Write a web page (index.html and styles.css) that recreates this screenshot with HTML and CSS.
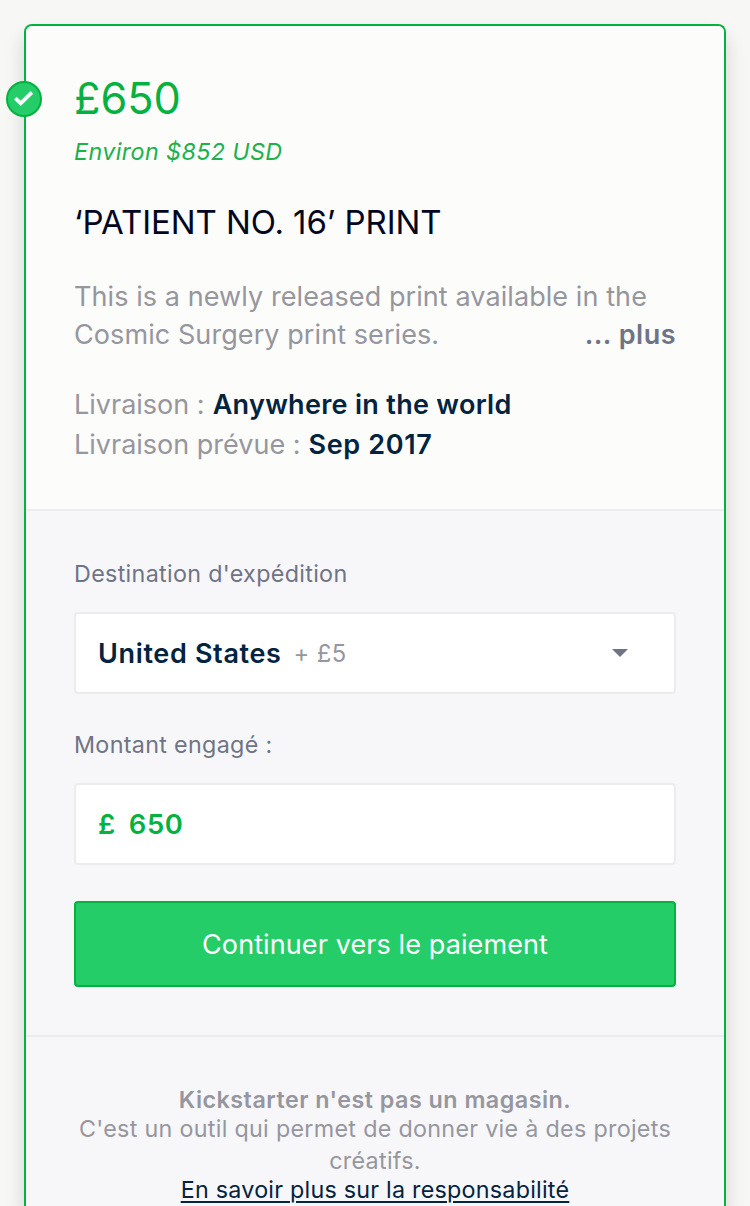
FILE: index.html
```html
<!DOCTYPE html>
<html lang="fr">
<head>
<meta charset="utf-8">
<title>£650</title>
<link rel="stylesheet" href="styles.css">
</head>
<body>
<main class="card">
  <span class="badge">
    <svg width="20" height="16" viewBox="0 0 20 16"><path d="M1.3 7.2L6.7 12.4L17.9 1.4" fill="none" stroke="#fff" stroke-width="3.8"/></svg>
  </span>
  <section class="reward">
    <h2 class="price">£650</h2>
    <p class="approx">Environ $852 USD</p>
    <h3 class="title">‘PATIENT NO. 16’ PRINT</h3>
    <div class="desc">
      <p class="desc-line"><span>This is a newly released print available in the</span></p>
      <p class="desc-line"><span>Cosmic Surgery print series.</span><b class="more">... plus</b></p>
    </div>
    <p class="detail"><span class="detail-label">Livraison :</span><b class="where">Anywhere in the world</b></p>
    <p class="detail"><span class="detail-label">Livraison prévue :</span><b class="when">Sep 2017</b></p>
  </section>
  <section class="pledge">
    <p class="label">Destination d'expédition</p>
    <div class="field">
      <b class="country">United States</b><span class="fee">+ £5</span>
      <svg class="caret" width="16" height="8" viewBox="0 0 16 8"><path d="M0 0H16L8 8Z" fill="#6f7485"/></svg>
    </div>
    <p class="label label-amount">Montant engagé :</p>
    <div class="field amount"><span class="currency">£</span><span>650</span></div>
    <button class="submit">Continuer vers le paiement</button>
  </section>
  <footer class="note">
    <b class="note-title">Kickstarter n'est pas un magasin.</b>
    <p class="note-text">C'est un outil qui permet de donner vie à des projets créatifs.</p>
    <a class="note-link">En savoir plus sur la responsabilité</a>
  </footer>
</main>
</body>
</html>
```
FILE: styles.css
```css
* { box-sizing: border-box; margin: 0; padding: 0; }
body {
  height: 1206px;
  padding: 24px 24px 0;
  background: #f7f7f5;
  font-family: Inter, "Liberation Sans", sans-serif;
  font-size: 27px;
  color: #96969e;
}
b { font-weight: 600; }
.card {
  position: relative;
  height: 1182px;
  border: 2px solid #05b141;
  border-bottom: 0;
  border-radius: 8px 8px 0 0;
  background: #f7f7fa;
  box-shadow: 0 12px 20px rgba(0, 0, 0, 0.15);
}
.badge {
  position: absolute;
  left: -20px;
  top: 55px;
  width: 36px;
  height: 36px;
  display: flex;
  align-items: center;
  justify-content: center;
  border: 2px solid #05b141;
  border-radius: 50%;
  background: #25cd69;
}
.badge svg { overflow: visible; }
.reward {
  height: 485px;
  padding: 42px 48px 0;
  background: #fcfcfa;
  border-bottom: 2px solid #ececec;
  border-radius: 6px 6px 0 0;
}
.price { font-size: 43.3px; font-weight: 400; line-height: 60px; color: #05b141; }
.approx { margin-top: 8px; font-size: 23.3px; font-style: italic; line-height: 32px; letter-spacing: 0.4px; color: #1bb14d; }
.title { margin-top: 32px; font-size: 33px; font-weight: 400; line-height: 44px; letter-spacing: -0.08px; color: #020621; white-space: nowrap; }
.desc { margin: 34px 0 31px; line-height: 38px; letter-spacing: 0.08px; }
.desc-line { display: flex; justify-content: space-between; white-space: nowrap; }
.more { color: #6f7485; letter-spacing: 0.5px; }
.detail { display: flex; gap: 8px; line-height: 40px; white-space: nowrap; }
.where, .when, .country { color: #032340; }
.where { letter-spacing: 0.3px; }
.when, .country { letter-spacing: 0.65px; }
.pledge {
  height: 526px;
  padding: 47px 48px 0;
  border-bottom: 2px solid #ececec;
}
.label { margin-bottom: 22px; font-size: 23.3px; line-height: 32px; letter-spacing: 0.32px; color: #6f7485; }
.field {
  display: flex;
  align-items: center;
  height: 82px;
  padding: 0 46px 0 22px;
  border: 2px solid #ececee;
  border-radius: 4px;
  background: #fff;
}
.fee { margin-left: 12px; font-size: 23.8px; letter-spacing: 0.4px; }
.caret { margin-left: auto; }
.label-amount { margin-top: 35px; }
.amount { gap: 13px; font-size: 27.4px; font-weight: 600; letter-spacing: 0.6px; color: #05b141; }
.submit {
  display: block;
  width: 100%;
  height: 86px;
  margin-top: 36px;
  border: 2px solid #05b141;
  border-radius: 4px;
  background: #25cd69;
  color: #fff;
  font: 400 27px Inter, sans-serif;
  letter-spacing: 0.1px;
}
.note { padding: 47px 48px 0; text-align: center; font-size: 23.3px; letter-spacing: 0.3px; }
.note-title { display: block; line-height: 32px; letter-spacing: 0.48px; }
.note-text { margin-top: -3px; line-height: 32px; }
.note-link {
  display: block;
  margin-top: -3px;
  line-height: 32px;
  letter-spacing: 0.24px;
  color: #032340;
  text-decoration: underline;
  text-decoration-thickness: 2px;
  text-underline-offset: 3px;
}
```
